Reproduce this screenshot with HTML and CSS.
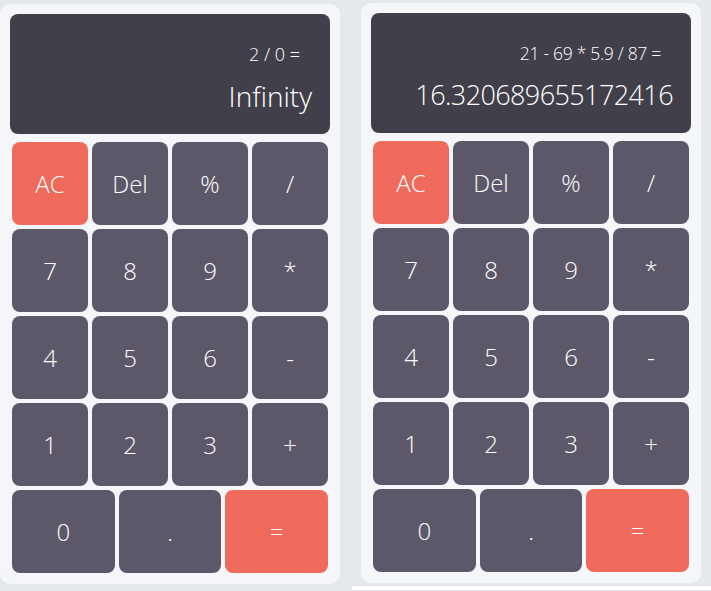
FILE: index.html
```html
<!DOCTYPE html>
<html>
<head>
<meta charset="utf-8">
<link rel="stylesheet" href="styles.css">
</head>
<body>
<div class="row">
  <div class="calc calc-left">
    <div class="display">
      <div class="expr">2 / 0 =</div>
      <div class="result">Infinity</div>
    </div>
    <div class="keys">
      <div class="key accent">AC</div>
      <div class="key">Del</div>
      <div class="key">%</div>
      <div class="key">/</div>
      <div class="key">7</div>
      <div class="key">8</div>
      <div class="key">9</div>
      <div class="key">*</div>
      <div class="key">4</div>
      <div class="key">5</div>
      <div class="key">6</div>
      <div class="key">-</div>
      <div class="key">1</div>
      <div class="key">2</div>
      <div class="key">3</div>
      <div class="key">+</div>
      <div class="key wide">0</div>
      <div class="key wide">.</div>
      <div class="key wide accent">=</div>
    </div>
  </div>
  <div class="calc calc-right">
    <div class="display display-long">
      <div class="expr">21 - 69 * 5.9 / 87 =</div>
      <div class="result">16.320689655172416</div>
    </div>
    <div class="keys">
      <div class="key accent">AC</div>
      <div class="key">Del</div>
      <div class="key">%</div>
      <div class="key">/</div>
      <div class="key">7</div>
      <div class="key">8</div>
      <div class="key">9</div>
      <div class="key">*</div>
      <div class="key">4</div>
      <div class="key">5</div>
      <div class="key">6</div>
      <div class="key">-</div>
      <div class="key">1</div>
      <div class="key">2</div>
      <div class="key">3</div>
      <div class="key">+</div>
      <div class="key wide">0</div>
      <div class="key wide">.</div>
      <div class="key wide accent">=</div>
    </div>
  </div>
</div>
<div class="strip"></div>
</body>
</html>
```

FILE: styles.css
```css
* { box-sizing: border-box; }
html, body { margin: 0; padding: 0; }
body {
  background: #e5e8ec;
  font-family: "Open Sans", "Noto Sans", sans-serif;
  font-weight: 300;
  color: #fff;
  width: 711px;
  height: 591px;
  overflow: hidden;
}
.row {
  display: flex;
  align-items: flex-start;
  gap: 21px;
  padding-top: 3px;
}
.calc {
  width: 340px;
  height: 580px;
  background: #f5f6fa;
  border-radius: 10px;
  padding: 10px 10px 9px;
}
.calc-left { margin-top: 1px; }
.display {
  height: 120px;
  background: #41404a;
  border-radius: 8px;
  padding: 28px 18px 20px;
  display: flex;
  flex-direction: column;
  align-items: flex-end;
}
.expr {
  font-size: 18px;
  line-height: 24px;
  margin-right: 12px;
  margin-bottom: 12px;
  white-space: nowrap;
}
.result {
  font-size: 28px;
  line-height: 36px;
  white-space: nowrap;
}
.display-long .expr {
  font-size: 17.5px;
  letter-spacing: -0.3px;
}
.display-long .result {
  font-size: 27px;
  letter-spacing: -0.6px;
}
.keys {
  margin-top: 6px;
  padding: 2px;
  display: grid;
  grid-template-columns: repeat(12, 1fr);
  grid-auto-rows: 83px;
  gap: 4px;
}
.key {
  grid-column: span 3;
  background: #5d5869;
  border-radius: 8px;
  display: flex;
  align-items: center;
  justify-content: center;
  font-size: 24px;
}
.key.wide { grid-column: span 4; }
.key.accent { background: #ef6a5a; }
.strip {
  margin: 2px 0 0 352px;
  height: 4px;
  background: #fff;
}
```
